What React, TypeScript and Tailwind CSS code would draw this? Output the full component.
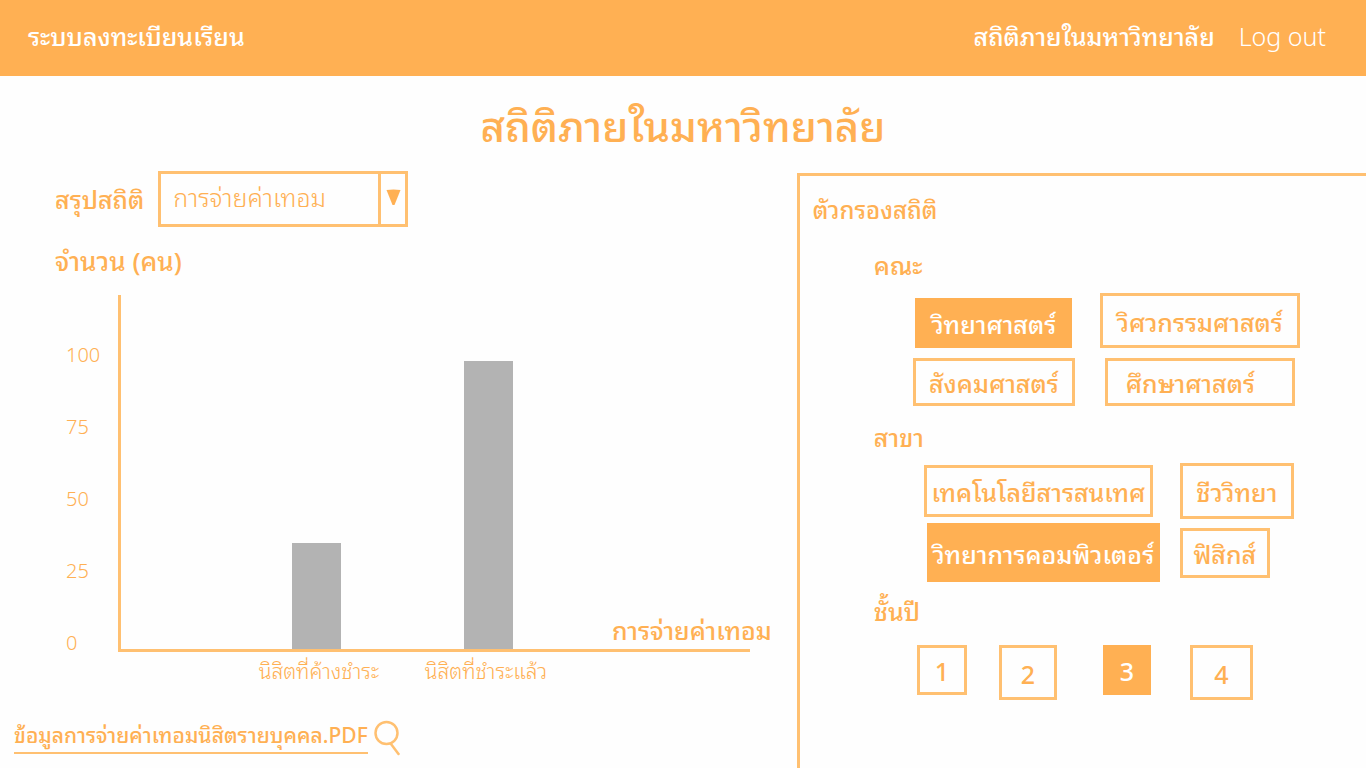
import { useState } from "react";

type Choice = { label: string; box: string };

const faculties: Choice[] = [
  { label: "วิทยาศาสตร์", box: "h-[50px] w-[157px] self-end justify-self-center text-center" },
  { label: "วิศวกรรมศาสตร์", box: "h-[55px] w-[200px] text-center" },
  { label: "สังคมศาสตร์", box: "h-[48px] w-[162px] text-center" },
  { label: "ศึกษาศาสตร์", box: "h-[48px] w-[190px] self-end justify-self-center pl-[18px] text-left" },
];

const majors: Choice[] = [
  { label: "เทคโนโลยีสารสนเทศ", box: "h-[52px] w-[229px] text-center" },
  { label: "ชีววิทยา", box: "h-[56px] w-[114px] text-center" },
  { label: "วิทยาการคอมพิวเตอร์", box: "h-[59px] w-[233px] justify-self-end text-center" },
  { label: "ฟิสิกส์", box: "h-[50px] w-[90px] text-center" },
];

const years: Choice[] = [
  { label: "1", box: "h-[50px] w-[50px] text-center" },
  { label: "2", box: "h-[55px] w-[58px] text-center" },
  { label: "3", box: "h-[50px] w-[48px] text-center" },
  { label: "4", box: "h-[55px] w-[63px] text-center" },
];

const ticks = [100, 75, 50, 25, 0];

const bars = [
  { label: "นิสิตที่ค้างชำระ", height: 106 },
  { label: "นิสิตที่ชำระแล้ว", height: 288 },
];

function Toggle({ choice, active, onPick }: { choice: Choice; active: boolean; onPick: () => void }) {
  const tone = active ? "bg-[#ffb053] text-white" : "border-[3px] border-[#ffc071] text-[#ffb053]";
  return (
    <button
      type="button"
      aria-pressed={active}
      onClick={onPick}
      className={`text-[25px] leading-8 font-medium whitespace-nowrap ${tone} ${choice.box}`}
    >
      {choice.label}
    </button>
  );
}

export default function App() {
  const [faculty, setFaculty] = useState("วิทยาศาสตร์");
  const [major, setMajor] = useState("วิทยาการคอมพิวเตอร์");
  const [year, setYear] = useState("3");

  return (
    <div className="flex min-h-screen flex-col bg-[#fefefe] font-['Noto_Sans_Thai_Looped','Noto_Sans_Thai','Noto_Sans',sans-serif] text-[#ffb053]">
      <header className="flex h-[76px] items-center justify-between bg-[#ffb053] pr-10 pb-1 pl-7 text-[25px] text-white">
        <a href="#home" className="font-medium">ระบบลงทะเบียนเรียน</a>
        <nav className="flex items-center gap-6">
          <a href="#stats" className="font-medium">สถิติภายในมหาวิทยาลัย</a>
          <a href="#logout" className="font-light">Log out</a>
        </nav>
      </header>

      <h1 className="flex h-[95px] items-center justify-center text-[42px] font-medium">สถิติภายในมหาวิทยาลัย</h1>

      <main className="grid flex-1 grid-cols-12">
        <section className="col-span-7 flex flex-col">
          <div className="flex items-center gap-[14px] pl-[55px]">
            <label htmlFor="summary" className="text-[25px] font-medium">สรุปสถิติ</label>
            <div className="grid w-[250px]">
              <select
                id="summary"
                className="col-start-1 row-start-1 h-14 appearance-none border-[3px] border-[#ffc071] pb-1 pl-3 text-[25px] font-light"
              >
                <option>การจ่ายค่าเทอม</option>
              </select>
              <span className="pointer-events-none col-start-1 row-start-1 flex w-[30px] justify-center justify-self-end border-l-[3px] border-[#ffc071] pt-[18px] pr-[3px]">
                <svg width="15" height="17" viewBox="0 0 14 17" fill="#ffb053" aria-hidden="true">
                  <path d="M0 1Q7 0 14 1L8 16H6Z" />
                </svg>
              </span>
            </div>
          </div>

          <h2 className="pt-3 pl-[55px] text-[26px] leading-10 font-medium">จำนวน (คน)</h2>

          <div className="flex pt-4">
            <div className="flex w-[118px] flex-col pt-[22px] pl-[66px] text-xl font-light">
              {ticks.map((t) => (
                <span key={t} className="h-[72px] leading-[72px]">{t}</span>
              ))}
            </div>
            <div className="w-[632px]">
              <div className="flex h-[357px] items-end gap-[36px] border-b-[3px] border-l-[3px] border-[#ffc071] pl-[127px]">
                {bars.map((b) => (
                  <div key={b.label} className="flex w-[136px] shrink-0 justify-center">
                    <div className="w-[49px] bg-[#b3b3b3]" style={{ height: b.height }} />
                  </div>
                ))}
                <span className="shrink-0 pl-5 text-[25px] leading-10 font-medium whitespace-nowrap">การจ่ายค่าเทอม</span>
              </div>
              <div className="flex gap-[31px] pt-1 pl-[133px] text-[21px] leading-7 font-light">
                {bars.map((b) => (
                  <span key={b.label} className="w-[136px] text-center whitespace-nowrap">{b.label}</span>
                ))}
              </div>
            </div>
          </div>

          <div className="mt-auto flex items-start gap-[6px] pb-3 pl-[14px]">
            <a href="#report" className="border-b-2 border-[#ffc071] pb-1 text-[21px] leading-7 font-medium">
              ข้อมูลการจ่ายค่าเทอมนิสิตรายบุคคล.PDF
            </a>
            <button type="button" aria-label="ค้นหา">
              <svg width="28" height="36" viewBox="0 0 28 36" fill="none" stroke="#ffc071" strokeWidth="2.5" strokeLinecap="round" aria-hidden="true">
                <circle cx="12.500" cy="13" r="11" />
                <path d="M17 24L24.500 34" />
              </svg>
            </button>
          </div>
        </section>

        <aside className="col-span-5 mt-[2px] border-t-[3px] border-l-[3px] border-[#ffc071]">
          <h2 className="pt-4 pl-[13px] text-2xl font-medium">ตัวกรองสถิติ</h2>
          <section className="pl-[74px]">
            <h3 className="pt-6 text-[25px] leading-8 font-medium">คณะ</h3>
            <div className="grid grid-cols-[162px_200px] items-center gap-x-[25px] gap-y-[10px] pt-[13px] pl-[39px]">
              {faculties.map((c) => (
                <Toggle key={c.label} choice={c} active={c.label === faculty} onPick={() => setFaculty(c.label)} />
              ))}
            </div>
          </section>
          <section className="pl-[74px]">
            <h3 className="pt-[14px] text-[25px] leading-8 font-medium">สาขา</h3>
            <div className="grid grid-cols-[236px_114px] items-center gap-x-[20px] gap-y-[4px] pt-[11px] pl-[50px]">
              {majors.map((c) => (
                <Toggle key={c.label} choice={c} active={c.label === major} onPick={() => setMajor(c.label)} />
              ))}
            </div>
          </section>
          <section className="pl-[74px]">
            <h3 className="pt-3 text-[25px] leading-8 font-medium">ชั้นปี</h3>
            <div className="grid grid-cols-[82px_104px_87px_63px] items-start pt-[19px] pl-[43px]">
              {years.map((c) => (
                <Toggle key={c.label} choice={c} active={c.label === year} onPick={() => setYear(c.label)} />
              ))}
            </div>
          </section>
        </aside>
      </main>
    </div>
  );
}
